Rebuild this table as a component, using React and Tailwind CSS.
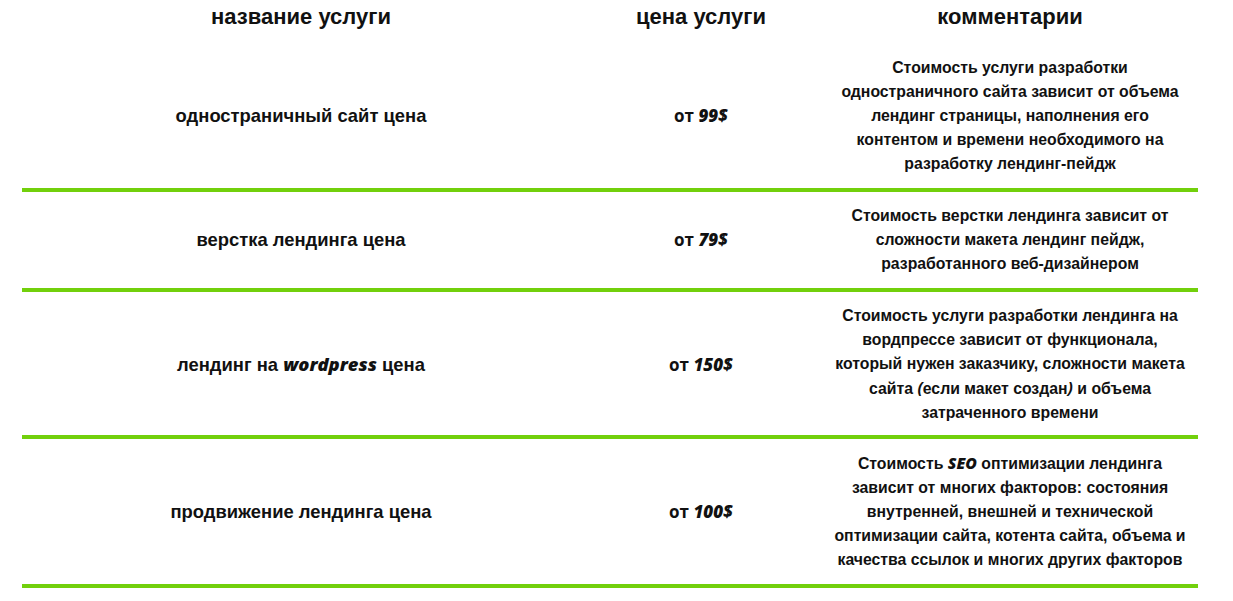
import React from 'react';

const rows = [
  {
    pad: 'pt-[12px] pb-[12px]',
    title: <>одностраничный сайт цена</>,
    price: '99$',
    comment: (
      <>
        Стоимость услуги разработки<br />
        одностраничного сайта зависит от объема<br />
        лендинг страницы, наполнения его<br />
        контентом и времени необходимого на<br />
        разработку лендинг-пейдж
      </>
    ),
  },
  {
    pad: 'pt-[12px] pb-[12px]',
    title: <>верстка лендинга цена</>,
    price: '79$',
    comment: (
      <>
        Стоимость верстки лендинга зависит от<br />
        сложности макета лендинг пейдж,<br />
        разработанного веб-дизайнером
      </>
    ),
  },
  {
    pad: 'pt-[12px] pb-[10px]',
    title: (
      <>
        лендинг на <em className="font-['Open_Sans',sans-serif] font-extrabold">wordpress</em> цена
      </>
    ),
    price: '150$',
    comment: (
      <>
        Стоимость услуги разработки лендинга на<br />
        вордпрессе зависит от функционала,<br />
        который нужен заказчику, сложности макета<br />
        сайта <em className="font-['Open_Sans',sans-serif]">(</em>если макет создан<em className="font-['Open_Sans',sans-serif]">)</em> и объема<br />
        затраченного времени
      </>
    ),
  },
  {
    pad: 'pt-[12px] pb-[12px]',
    title: <>продвижение лендинга цена</>,
    price: '100$',
    comment: (
      <>
        Стоимость <em className="font-['Open_Sans',sans-serif] font-extrabold">SEO</em> оптимизации лендинга<br />
        зависит от многих факторов: состояния<br />
        внутренней, внешней и технической<br />
        оптимизации сайта, котента сайта, объема и<br />
        качества ссылок и многих других факторов
      </>
    ),
  },
];

export default function App() {
  return (
    <div className="min-h-screen bg-white text-[#111] font-['Liberation_Sans',Arial,sans-serif]">
      <div className="ml-[22px] w-[1176px]">
        {/* header */}
        <div className="grid grid-cols-[558px_242px_376px] h-[44px] pt-[4px] text-[22px] leading-[26px] font-bold text-center">
          <div>название услуги</div>
          <div>цена услуги</div>
          <div>комментарии</div>
        </div>

        {rows.map((r, i) => (
          <div
            key={i}
            className={`grid grid-cols-[558px_242px_376px] items-center border-b-4 border-[#72d00c] ${r.pad}`}
          >
            <div className="text-center text-[18.4px] font-bold">{r.title}</div>
            <div className="text-center text-[17px] font-bold font-['Open_Sans',sans-serif]">
              от <em className="font-extrabold">{r.price}</em>
            </div>
            <div className="text-center text-[15.8px] leading-[24px] font-bold whitespace-nowrap">
              {r.comment}
            </div>
          </div>
        ))}
      </div>
    </div>
  );
}
